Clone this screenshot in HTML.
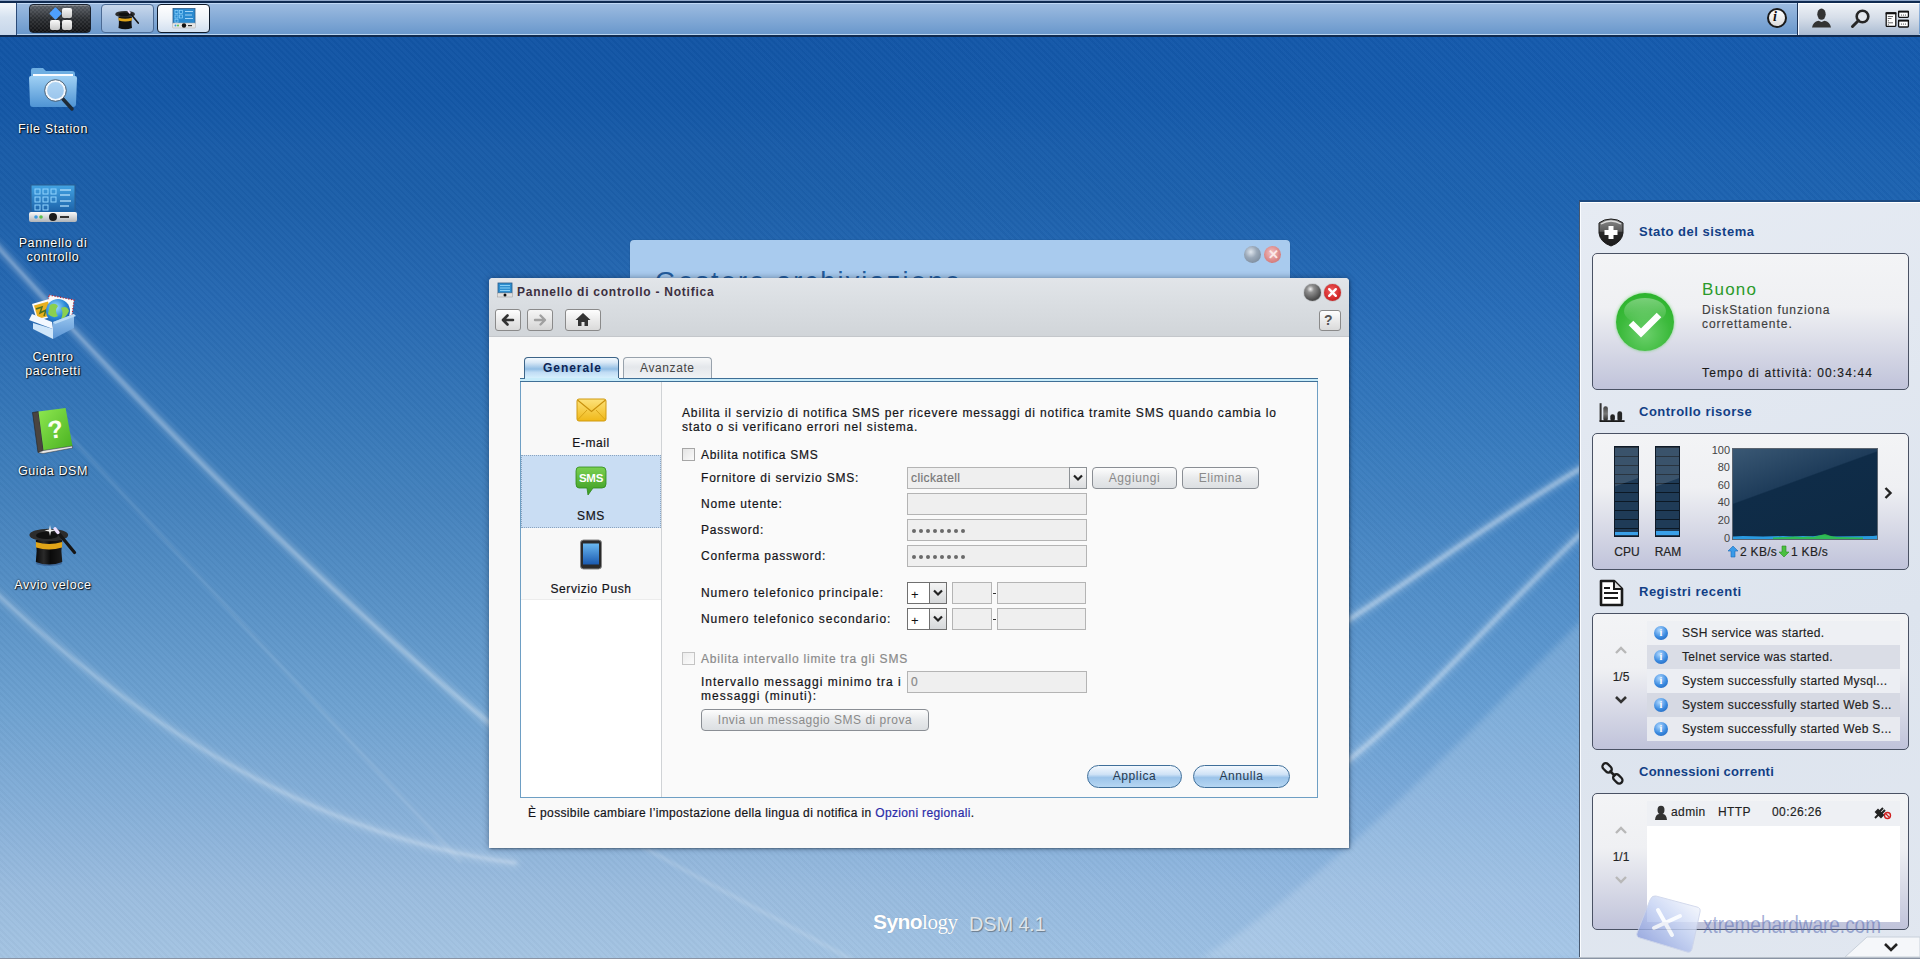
<!DOCTYPE html>
<html><head><meta charset="utf-8">
<style>
*{box-sizing:border-box}
html,body{margin:0;padding:0}
body{width:1920px;height:959px;overflow:hidden;position:relative;font-family:"Liberation Sans",sans-serif;font-size:12px;color:#000;
background:linear-gradient(to right,rgba(40,130,230,0) 700px,rgba(40,130,230,.12) 1580px),linear-gradient(to bottom,#0f3f7c 0,#0f3f7c 37px,#1255a5 37px,#1357a6 100px,#195ca8 150px,#1c5fa9 200px,#2769b2 305px,#3677b8 420px,#4482bd 505px,#6da1d0 705px,#86afd8 810px,#9abcde 890px,#a4c4e2 959px);}
.abs{position:absolute}
.t{position:absolute;white-space:nowrap;line-height:14px}
#stripes{position:absolute;left:0;top:37px;width:1920px;height:922px;background:repeating-linear-gradient(45deg,rgba(255,255,255,0.02) 0 2.5px,rgba(0,0,0,0.018) 2.5px 4.5px)}
#swoosh{position:absolute;left:0;top:0}
/* top bar */
#topbar{position:absolute;left:0;top:0;width:1920px;height:37px;background:#0f2a50}
#topbar .g{position:absolute;left:0;top:3px;width:1920px;height:32px;background:linear-gradient(to bottom,#c0d8f5 0,#c0d8f5 1px,#9cbbe0 1px,#6a98cc 31px,#b8d4f0 31px)}
#topbar .t0{position:absolute;left:0;top:0;width:1920px;height:1px;background:#8fa6c8}
.dl{position:absolute;width:106px;left:0;text-align:center;color:#fff;font-size:12.5px;line-height:14px;letter-spacing:.62px;text-shadow:0 0 2px #000,1px 1px 1px rgba(0,0,0,.8)}
/* dialog */
.lbl{position:absolute;white-space:nowrap;line-height:14px;font-size:12px;letter-spacing:.8px;color:#141418;-webkit-text-stroke:.2px currentColor}
.inp{position:absolute;height:22px;background:#efefef;border:1px solid #b4b4b4}
.btn{position:absolute;height:22px;border:1px solid #8a8e94;border-radius:4px;background:linear-gradient(to bottom,#fdfdfd,#e8eaec 50%,#dcdfe2);color:#8a8a8a;text-align:center;line-height:20px;font-size:12px;letter-spacing:.6px}
.tool{position:absolute;height:22px;border:1px solid #8a8a8a;border-radius:3px;background:linear-gradient(to bottom,#fefefe,#e9e9e9 55%,#dadada)}
.pill{position:absolute;height:23px;border:1px solid #3f6f9a;border-radius:12px;background:linear-gradient(to bottom,#f4f9fe 0,#cfe2f6 40%,#9cc4ea 55%,#b6d6f2 100%);text-align:center;line-height:21px;color:#263a50;font-size:12px;letter-spacing:.6px}
/* right panel */
.hd{position:absolute;left:1639px;font-weight:bold;font-size:13px;color:#123f86;line-height:15px;white-space:nowrap;letter-spacing:.5px}
.box{position:absolute;left:1592px;width:317px;height:137px;border:1px solid #4a5264;border-radius:5px;background:linear-gradient(to bottom,#f3f4f6 0,#eff0f3 40%,#c0c3da 100%)}
.rt{position:absolute;white-space:nowrap;line-height:14px;font-size:12px;color:#222;letter-spacing:.5px;-webkit-text-stroke:.15px currentColor}
</style></head><body>
<div id="stripes"></div>
<svg id="swoosh" width="1920" height="959">
  <defs>
    <filter id="bl" x="-10%" y="-10%" width="120%" height="120%"><feGaussianBlur stdDeviation="1.5"/></filter>
    <filter id="bl2" x="-10%" y="-10%" width="120%" height="120%"><feGaussianBlur stdDeviation="3"/></filter>
  </defs>
  <g filter="url(#bl2)" fill="none" stroke-linecap="round" opacity=".8">
    <path d="M-5 243.4 L15 265.9 L35 288.2 L55 310.2 L75 331.9 L95 353.4 L115 374.6 L135 395.5 L155 416.2 L175 436.6 L195 456.7 L215 476.6 L235 496.3 L255 515.6 L275 534.7 L295 553.6 L315 572.1 L335 590.4 L355 608.5 L375 626.3 L395 643.8 L415 661.0 L435 678.0 L455 694.8 L475 711.2 L495 727.4 L515 743.4" stroke="rgba(255,255,255,0.25)" stroke-width="9" stroke-linejoin="round"/>
    <path d="M-5 592.4 L15 610.3 L35 627.6 L55 644.3 L75 660.4 L95 675.9 L115 690.8 L135 705.1 L155 718.8 L175 731.9 L195 744.4 L215 756.3 L235 767.6 L255 778.3 L275 788.4 L295 797.9 L315 806.8 L335 815.1 L355 822.8 L375 830.0 L395 836.5 L415 842.4 L435 847.7 L455 852.4 L475 856.5 L495 860.0 L515 863.0" stroke="rgba(255,255,255,0.2)" stroke-width="9" stroke-linejoin="round"/>
    <path d="M1345 622 C 1420 575, 1500 515, 1585 466" stroke="rgba(255,255,255,0.25)" stroke-width="10"/>
    <path d="M1345 763 C 1420 705, 1500 610, 1585 530" stroke="rgba(255,255,255,0.22)" stroke-width="10"/>
  </g>
  <g filter="url(#bl)" fill="none" stroke-linecap="round">
    <path d="M-5 243.4 L15 265.9 L35 288.2 L55 310.2 L75 331.9 L95 353.4 L115 374.6 L135 395.5 L155 416.2 L175 436.6 L195 456.7 L215 476.6 L235 496.3 L255 515.6 L275 534.7 L295 553.6 L315 572.1 L335 590.4 L355 608.5 L375 626.3 L395 643.8 L415 661.0 L435 678.0 L455 694.8 L475 711.2 L495 727.4 L515 743.4" stroke="rgba(255,255,255,0.27)" stroke-width="3.5" stroke-linejoin="round"/>
    <path d="M-5 592.4 L15 610.3 L35 627.6 L55 644.3 L75 660.4 L95 675.9 L115 690.8 L135 705.1 L155 718.8 L175 731.9 L195 744.4 L215 756.3 L235 767.6 L255 778.3 L275 788.4 L295 797.9 L315 806.8 L335 815.1 L355 822.8 L375 830.0 L395 836.5 L415 842.4 L435 847.7 L455 852.4 L475 856.5 L495 860.0 L515 863.0" stroke="rgba(255,255,255,0.24)" stroke-width="3" stroke-linejoin="round"/>
    <path d="M60 425.6 L100 469.2 L140 512.7 L180 556.3 L220 599.8 L260 643.4 L300 686.9 L340 730.5 L380 774.1 L420 817.6 L460 861.2" stroke="rgba(255,255,255,0.12)" stroke-width="3" stroke-linejoin="round"/>
    <path d="M640 845 C 700 880, 780 920, 850 959" stroke="rgba(255,255,255,0.15)" stroke-width="4"/>
    <path d="M1345 622 C 1420 575, 1500 515, 1585 466" stroke="rgba(255,255,255,0.3)" stroke-width="5"/>
    <path d="M1345 763 C 1420 705, 1500 610, 1585 530" stroke="rgba(255,255,255,0.28)" stroke-width="5"/>
  </g>
  <path d="M1200 959 C 1340 870, 1450 750, 1590 612 L 1590 959 Z" fill="rgba(255,255,255,0.16)" filter="url(#bl2)"/>
</svg>

<!-- TOP BAR -->
<div id="topbar">
  <div class="t0"></div>
  <div class="g"></div>
  <div class="abs" style="left:0;top:3px;width:17px;height:32px;background:linear-gradient(to bottom,#f4f8fc,#d6e2f0 45%,#c6d6ea);border-right:1px solid #2a4a78"></div>
  <!-- start button -->
  <div class="abs" style="left:29px;top:4px;width:62px;height:29px;border-radius:4px;border:1px solid #1a2330;background:repeating-conic-gradient(rgba(255,255,255,.07) 0 25%,rgba(0,0,0,0) 0 50%) 0 0/4px 4px,linear-gradient(to bottom,#5a5f66,#2a2d31 50%,#121316);box-shadow:inset 0 1px 0 rgba(255,255,255,.25)">
    <div class="abs" style="left:21px;top:4px;width:9px;height:9px;background:#4ea0ff;transform:rotate(45deg);border-radius:1px"></div>
    <div class="abs" style="left:32px;top:3px;width:10px;height:10px;background:linear-gradient(#fafafa,#c8c8c8);border-radius:2px"></div>
    <div class="abs" style="left:20px;top:15px;width:10px;height:10px;background:linear-gradient(#fafafa,#c8c8c8);border-radius:2px"></div>
    <div class="abs" style="left:32px;top:15px;width:10px;height:10px;background:linear-gradient(#fafafa,#c8c8c8);border-radius:2px"></div>
  </div>
  <!-- hat button -->
  <div class="abs" style="left:101px;top:4px;width:53px;height:29px;border-radius:4px;border:1px solid #4a6a94;background:linear-gradient(to bottom,#c8d8ec,#a6c0e0 55%,#8eb0d8)">
    <svg class="abs" style="left:13px;top:3px" width="24" height="22" viewBox="9 8 47 43">
      <path d="M15.8 25 Q17.5 36 15.8 47 Q29 52 42.3 47 Q40.5 36 42.3 25 Z" fill="#111"/>
      <path d="M15.9 27 Q29 31 42.2 27 L42 32.5 Q29 36.5 16 32.5 Z" fill="#e0a418"/>
      <ellipse cx="28.8" cy="20" rx="19.4" ry="6.3" fill="#2c2c2c"/>
      <ellipse cx="27" cy="20.4" rx="11" ry="3.6" fill="#101010"/>
      <line x1="36" y1="15" x2="54.5" y2="37.5" stroke="#161616" stroke-width="3.2" stroke-linecap="round"/>
      <line x1="35" y1="13.8" x2="38" y2="17.5" stroke="#f0e0ff" stroke-width="3.4" stroke-linecap="round"/>
    </svg>
  </div>
  <!-- control panel button (active) -->
  <div class="abs" style="left:157px;top:4px;width:53px;height:29px;border-radius:4px;border:1px solid #0e1a2a;background:linear-gradient(to bottom,#ffffff,#eef3f9 50%,#d2e0f0)">
    <svg class="abs" style="left:14px;top:3px" width="24" height="21" viewBox="0 0 24 21">
      <rect x="1" y="0.5" width="22" height="15" fill="#2a8ad0" stroke="#2a5a88" stroke-width=".8"/>
      <g fill="none" stroke="#8fd4ff" stroke-width=".7"><rect x="3" y="2.5" width="3" height="3"/><rect x="7.5" y="2.5" width="3" height="3"/><rect x="3" y="7" width="3" height="3"/><rect x="7.5" y="7" width="3" height="3"/><rect x="3" y="11.2" width="3" height="3"/></g>
      <g stroke="#bfe6ff" stroke-width=".8"><line x1="13" y1="3.5" x2="21" y2="3.5"/><line x1="13" y1="7" x2="20" y2="7"/><line x1="13" y1="10.5" x2="21" y2="10.5"/></g>
      <rect x="0.5" y="15" width="23" height="5" rx="1" fill="#e6e6e6" stroke="#aaa" stroke-width=".5"/>
      <circle cx="3.5" cy="17.5" r="1" fill="#3a9ae0"/><circle cx="6" cy="17.5" r="1" fill="#5ac04a"/>
      <circle cx="12" cy="17.5" r="2.2" fill="#111"/>
      <rect x="16" y="17" width="4" height="1.2" fill="#333"/>
    </svg>
  </div>
  <!-- right -->
  <div class="abs" style="left:1767px;top:8px;width:20px;height:20px;border-radius:50%;border:2.5px solid #1a1a1a;background:linear-gradient(#ffffff,#dcdcdc)"></div>
  <div class="t" style="left:1773px;top:9px;font:italic bold 14px 'Liberation Serif',serif;color:#111">i</div>
  <div class="abs" style="left:1797px;top:3px;width:1px;height:32px;background:#1c3458"></div>
  <div class="abs" style="left:1798px;top:3px;width:121px;height:32px;background:linear-gradient(to bottom,#eef1f6,#d6dee9 45%,#aabbd2);border-top:1px solid #fff;border-left:1px solid #f4f8ff"></div>
  <svg class="abs" style="left:1810px;top:8px" width="24" height="21" viewBox="0 0 24 21">
    <ellipse cx="11.5" cy="6.2" rx="4.2" ry="5.6" fill="#333"/>
    <path d="M2 19.5 Q3 14 8.5 12.8 L11.5 14 L14.5 12.8 Q20 14 21 19.5 Z" fill="#333"/>
  </svg>
  <svg class="abs" style="left:1850px;top:9px" width="22" height="20" viewBox="0 0 22 20">
    <circle cx="12.5" cy="7.5" r="5.8" stroke="#262626" stroke-width="2.6" fill="#e4e8ee"/>
    <line x1="8.5" y1="11.5" x2="2.5" y2="17.5" stroke="#262626" stroke-width="3" stroke-linecap="round"/>
  </svg>
  <svg class="abs" style="left:1885px;top:10px" width="25" height="18" viewBox="0 0 25 18">
    <rect x="1.2" y="3" width="9.6" height="13.4" rx=".8" fill="#fff" stroke="#111" stroke-width="1.3"/>
    <rect x="0.6" y="2.3" width="10.8" height="2" fill="#111"/>
    <g stroke="#444" stroke-width=".8"><line x1="2.8" y1="6.5" x2="8" y2="6.5"/><line x1="2.8" y1="8.5" x2="6.5" y2="8.5"/><line x1="2.8" y1="10.8" x2="4" y2="10.8"/><line x1="2.8" y1="12.8" x2="8" y2="12.8"/><line x1="2.8" y1="14.8" x2="4" y2="14.8"/></g>
    <rect x="13.6" y="1.4" width="9.8" height="6" rx=".8" fill="#fff" stroke="#111" stroke-width="1.3"/>
    <rect x="13" y="0.8" width="11" height="1.8" fill="#111"/>
    <rect x="13.6" y="10.4" width="9.8" height="6.6" rx=".8" fill="#fff" stroke="#111" stroke-width="1.3"/>
    <rect x="13" y="9.8" width="11" height="1.8" fill="#111"/>
    <g fill="#333"><circle cx="16.5" cy="5" r=".6"/><circle cx="18.5" cy="5" r=".6"/><circle cx="20.5" cy="5" r=".6"/><circle cx="16.5" cy="14" r=".6"/><circle cx="18.5" cy="14" r=".6"/><circle cx="20.5" cy="14" r=".6"/></g>
  </svg>
</div>

<!--DESKTOP-->
<!-- File Station -->
<svg class="abs" style="left:28px;top:66px" width="50" height="46" viewBox="0 0 50 46">
  <defs>
    <linearGradient id="fold" x1="0" y1="0" x2="0" y2="1"><stop offset="0" stop-color="#9fd0f4"/><stop offset="1" stop-color="#4f94d4"/></linearGradient>
  </defs>
  <path d="M3 4 Q3 2 5 2 L15 2 L18 5 L44 5 Q47 5 47 8 L47 12 L3 12 Z" fill="#6eaee2"/>
  <rect x="5" y="8" width="40" height="8" fill="#fafcff"/>
  <path d="M1 12 Q1 10 3 10 L47 10 Q49 10 49 12 L48 38 Q48 41 45 41 L5 41 Q2 41 2 38 Z" fill="url(#fold)"/>
  <line x1="34" y1="32" x2="44" y2="43" stroke="#1e2a36" stroke-width="3.5" stroke-linecap="round"/>
  <circle cx="27.5" cy="24.5" r="9.5" fill="rgba(200,225,250,.55)" stroke="#f4f8fc" stroke-width="2.2"/>
  <circle cx="27.5" cy="24.5" r="10.8" fill="none" stroke="#4a5a6a" stroke-width=".9"/>
</svg>
<div class="dl" style="top:122px">File Station</div>
<!-- Pannello di controllo -->
<svg class="abs" style="left:28px;top:184px" width="50" height="40" viewBox="0 0 50 40">
  <defs><linearGradient id="scr" x1="0" y1="0" x2="0" y2="1"><stop offset="0" stop-color="#43a4e4"/><stop offset="1" stop-color="#1a5fa6"/></linearGradient>
  <linearGradient id="base" x1="0" y1="0" x2="0" y2="1"><stop offset="0" stop-color="#fafafa"/><stop offset="1" stop-color="#b0b4b8"/></linearGradient></defs>
  <rect x="3" y="1" width="44" height="28" fill="url(#scr)" stroke="#2b5f8f"/>
  <g fill="none" stroke="#8fd4ff" stroke-width="1">
    <rect x="7" y="5" width="5" height="5"/><rect x="15" y="5" width="5" height="5"/><rect x="23" y="5" width="5" height="5"/>
    <rect x="7" y="13" width="5" height="5"/><rect x="15" y="13" width="5" height="5"/><rect x="23" y="13" width="5" height="5"/>
    <rect x="7" y="21" width="5" height="5"/><rect x="15" y="21" width="5" height="5"/>
  </g>
  <g stroke="#bfe6ff" stroke-width="1.2"><line x1="32" y1="6" x2="43" y2="6"/><line x1="32" y1="11" x2="42" y2="11"/><line x1="32" y1="17" x2="43" y2="17"/><line x1="32" y1="22" x2="41" y2="22"/></g>
  <rect x="1" y="28" width="48" height="10" rx="2" fill="url(#base)"/>
  <circle cx="8" cy="33" r="1.8" fill="#3a9ae0"/><circle cx="13" cy="33" r="1.8" fill="#5ac04a"/>
  <circle cx="25" cy="33" r="4" fill="#1a1a1a"/>
  <rect x="32" y="32" width="9" height="2" fill="#333"/>
</svg>
<div class="dl" style="top:236px">Pannello di<br>controllo</div>
<!-- Centro pacchetti -->
<svg class="abs" style="left:20px;top:285px" width="70" height="65" viewBox="0 0 70 65">
  <defs>
    <radialGradient id="glb" cx=".4" cy=".35" r=".7"><stop offset="0" stop-color="#a8e0ff"/><stop offset=".6" stop-color="#2a8ad8"/><stop offset="1" stop-color="#1a5aa8"/></radialGradient>
    <linearGradient id="bxr" x1="0" y1="0" x2="0" y2="1"><stop offset="0" stop-color="#9cc8f0"/><stop offset="1" stop-color="#5a94d4"/></linearGradient>
  </defs>
  <polygon points="29,10 54,15 52,31 27,26" fill="#f8f8f8" stroke="#c02030" stroke-width="1.2" stroke-dasharray="1.2 1.6"/>
  <polygon points="12,19 29,14 34,31 17,36" fill="#fafafa"/>
  <polygon points="14,20.5 28,16.5 32,30 18,34" fill="#e8b020"/>
  <path d="M16 24 L22 22 L20 28 L26 25 L24 31" stroke="#507020" stroke-width="1.5" fill="none"/>
  <circle cx="38" cy="26" r="12" fill="url(#glb)"/>
  <path d="M30 20 Q35 17 38 21 Q34 26 38 31 Q33 34 28 29 Z M41 23 Q47 20 49 26 Q46 33 41 34 Q44 28 41 23 Z" fill="#8ad050"/>
  <polygon points="33,37 54,29 54,43 33,54" fill="url(#bxr)"/>
  <polygon points="13,38 33,44 33,54 13,44" fill="#cfe6fa"/>
  <polygon points="9,35 12,29 32,37 33,44" fill="#f2f8ff"/>
  <polygon points="33,37 54,29 56,31 35,39" fill="#b8daf6"/>
</svg>
<div class="dl" style="top:350px">Centro<br>pacchetti</div>
<!-- Guida DSM -->
<svg class="abs" style="left:30px;top:406px" width="46" height="50" viewBox="0 0 46 50">
  <defs><linearGradient id="gbk" x1="0" y1="0" x2="1" y2="1"><stop offset="0" stop-color="#8ee850"/><stop offset="1" stop-color="#48b020"/></linearGradient></defs>
  <polygon points="2.5,6.5 8.5,5.6 13.5,44.5 8,46.5" fill="#4a4440" stroke="#222" stroke-width=".6"/>
  <polygon points="8.5,5.6 35.6,2 42.5,40 13.5,44.5" fill="url(#gbk)"/>
  <polygon points="8,46.5 13.5,44.5 42.5,40 42.5,42 13,47.5" fill="#e8e8e8" stroke="#333" stroke-width=".5"/>
  <text x="25.5" y="32" font-family="Liberation Sans" font-weight="bold" font-size="25" fill="#fafff0" transform="rotate(-8 25 24)" text-anchor="middle">?</text>
</svg>
<div class="dl" style="top:464px">Guida DSM</div>
<!-- Avvio veloce -->
<svg class="abs" style="left:20px;top:515px" width="70" height="60" viewBox="0 0 70 60">
  <defs><linearGradient id="hatc" x1="0" y1="0" x2="1" y2="0"><stop offset="0" stop-color="#0a0a0a"/><stop offset=".3" stop-color="#2a2a2a"/><stop offset=".55" stop-color="#0a0a0a"/><stop offset="1" stop-color="#1c1c1c"/></linearGradient></defs>
  <ellipse cx="29" cy="48" rx="13" ry="3" fill="rgba(0,0,40,.25)"/>
  <path d="M15.8 25 Q17.5 36 15.8 47 Q29 52 42.3 47 Q40.5 36 42.3 25 Z" fill="url(#hatc)"/>
  <path d="M15.9 27 Q29 31 42.2 27 L42 32.5 Q29 36.5 16 32.5 Z" fill="#e0a418"/>
  <ellipse cx="28.8" cy="20" rx="19.4" ry="6.3" fill="#2c2c2c"/>
  <ellipse cx="27" cy="20.4" rx="11" ry="3.6" fill="#101010"/>
  <line x1="36" y1="15" x2="54.5" y2="37.5" stroke="#161616" stroke-width="3.2" stroke-linecap="round"/>
  <line x1="35" y1="13.8" x2="38" y2="17.5" stroke="#f0e0ff" stroke-width="3.4" stroke-linecap="round"/>
  <path d="M30 10 L31 14.5 L35.5 15.5 L31 16.5 L30 21 L29 16.5 L24.5 15.5 L29 14.5 Z" fill="#fff" opacity=".9"/>
</svg>
<div class="dl" style="top:578px">Avvio veloce</div>

<!--DIALOGS-->
<!-- BACK WINDOW -->
<div class="abs" style="left:630px;top:240px;width:660px;height:60px;background:#a9cbee;border-radius:4px 4px 0 0;overflow:hidden;box-shadow:0 0 1px rgba(0,0,0,.4)">
  <div class="t" style="left:25px;top:27px;font-size:27px;line-height:30px;color:#235c9c;letter-spacing:2.2px">Gestore archiviazione</div>
  <div class="abs" style="left:614px;top:6px;width:17px;height:17px;border-radius:50%;background:radial-gradient(circle at 40% 35%,#dfe6ee 0,#9aa8b8 40%,#6f7f90 100%)"></div>
  <div class="abs" style="left:634px;top:6px;width:17px;height:17px;border-radius:50%;background:radial-gradient(circle at 45% 40%,#f4c4c4 0,#dc8a8a 55%,#c46a6a 100%)"></div>
  <div class="t" style="left:638px;top:7px;font:bold 13px/15px 'Liberation Sans';color:#fbe8e8">&#x2715;</div>
</div>

<!-- DIALOG -->
<div id="dlg" class="abs" style="left:489px;top:278px;width:860px;height:570px;background:#f9f9f9;border-radius:4px 4px 0 0;box-shadow:0 0 6px rgba(10,30,60,.45),1px 1px 2px rgba(0,0,0,.3)">
  <div class="abs" style="left:0;top:0;width:860px;height:59px;border-radius:4px 4px 0 0;background:linear-gradient(to bottom,#e2e5e9 0,#dce0e4 30%,#d1d5d9 100%);border-bottom:1px solid #c4c7cb"></div>
  <!-- title icon -->
  <svg class="abs" style="left:8px;top:4px" width="16" height="16" viewBox="0 0 16 16">
    <rect x="1" y="1" width="14" height="10" fill="#2f8fd0" stroke="#2a5a88" stroke-width=".8"/>
    <g stroke="#9fe0ff" stroke-width=".8"><line x1="3" y1="3.5" x2="13" y2="3.5"/><line x1="3" y1="6" x2="13" y2="6"/><line x1="3" y1="8.5" x2="13" y2="8.5"/></g>
    <rect x="0.5" y="11" width="15" height="4" fill="#e0e0e0" stroke="#999" stroke-width=".5"/>
    <circle cx="8" cy="13" r="1.5" fill="#111"/>
  </svg>
  <div class="t" style="left:28px;top:7px;font-weight:bold;font-size:12px;letter-spacing:.75px;color:#3b2f3f">Pannello di controllo - Notifica</div>
  <!-- min / close -->
  <div class="abs" style="left:815px;top:6px;width:17px;height:17px;border-radius:50%;background:radial-gradient(circle at 38% 30%,#f0f0f0 0,#909090 22%,#4a4a4a 70%,#6a6a6a 100%);box-shadow:0 0 1px #222"></div>
  <div class="abs" style="left:835px;top:6px;width:17px;height:17px;border-radius:50%;background:radial-gradient(circle at 45% 40%,#f06060 0,#d42a2a 60%,#a81818 100%);box-shadow:0 0 1px #622"></div>
  <svg class="abs" style="left:835px;top:6px" width="17" height="17" viewBox="0 0 17 17"><path d="M5.2 5.2 L11.8 11.8 M11.8 5.2 L5.2 11.8" stroke="#fff" stroke-width="2.4" stroke-linecap="round"/></svg>
  <!-- toolbar -->
  <div class="tool" style="left:6px;top:31px;width:26px;height:22px"></div>
  <svg class="abs" style="left:10px;top:34px" width="18" height="16" viewBox="0 0 18 16"><path d="M14 8 L4.5 8 M8.5 3.5 L4 8 L8.5 12.5" stroke="#333" stroke-width="2.6" fill="none" stroke-linecap="round" stroke-linejoin="round"/></svg>
  <div class="tool" style="left:38px;top:31px;width:26px;height:22px;background:linear-gradient(to bottom,#f6f6f6,#e4e4e4 55%,#d4d4d4)"></div>
  <svg class="abs" style="left:42px;top:34px" width="18" height="16" viewBox="0 0 18 16"><path d="M4 8 L13.5 8 M9.5 3.5 L14 8 L9.5 12.5" stroke="#a0a0a0" stroke-width="2.4" fill="none" stroke-linecap="round" stroke-linejoin="round"/></svg>
  <div class="tool" style="left:76px;top:31px;width:36px;height:22px"></div>
  <svg class="abs" style="left:85px;top:33px" width="18" height="17" viewBox="0 0 18 17"><path d="M9 2 L1.5 9 L4 9 L4 15 L7.5 15 L7.5 11 L10.5 11 L10.5 15 L14 15 L14 9 L16.5 9 Z" fill="#333"/></svg>
  <div class="tool" style="left:830px;top:32px;width:22px;height:21px"></div>
  <div class="t" style="left:835px;top:35px;font-weight:bold;font-size:14px;color:#555">?</div>

  <!-- tabs -->
  <div class="abs" style="left:35px;top:79px;width:95px;height:24px;border:1px solid #3c6488;border-bottom:none;border-radius:4px 4px 0 0;background:linear-gradient(to bottom,#f4faff 0,#d8e8f6 20%,#92bee4 48%,#c0dcf4 62%,#d4eefc 85%,#c8ecfa 100%)"></div>
  <div class="t" style="left:54px;top:83px;font-weight:bold;font-size:12px;letter-spacing:.95px;color:#0c2454">Generale</div>
  <div class="abs" style="left:134px;top:79px;width:89px;height:21px;border:1px solid #98a2ac;border-bottom:none;border-radius:4px 4px 0 0;background:linear-gradient(to bottom,#f8f9fa,#e4e7eb 45%,#f0f2f4)"></div>
  <div class="t" style="left:151px;top:83px;font-size:12px;letter-spacing:.6px;color:#444">Avanzate</div>
  <!-- tab strip -->
  <div class="abs" style="left:31px;top:100px;width:798px;height:4px;background:#c8ecfa;border-top:1px solid #3f6f96;border-bottom:1px solid #3f6f96"></div>
  <div class="abs" style="left:36px;top:100px;width:94px;height:3px;background:#c8ecfa"></div>
  <!-- tab panel -->
  <div class="abs" style="left:31px;top:104px;width:798px;height:416px;border:1px solid #6e9fc4;border-top:none;background:#fafafa"></div>
  <!-- nav column -->
  <div class="abs" style="left:32px;top:104px;width:141px;height:415px;background:#fff;border-right:1px solid #d0d3d6"></div>
  <div class="abs" style="left:32px;top:104px;width:140px;height:73px;background:#f8f8f8"></div>
  <div class="abs" style="left:32px;top:177px;width:140px;height:73px;background:#c9ddf3;border:1px dotted #8aa4c0"></div>
  <div class="abs" style="left:32px;top:250px;width:140px;height:72px;background:#f8f8f8;border-bottom:1px solid #ececec"></div>
  <!-- email icon -->
  <svg class="abs" style="left:87px;top:120px" width="31" height="25" viewBox="0 0 31 25">
    <defs><linearGradient id="env" x1="0" y1="0" x2="0" y2="1"><stop offset="0" stop-color="#fde27a"/><stop offset="1" stop-color="#f0b818"/></linearGradient></defs>
    <rect x="1" y="1" width="29" height="22" rx="2" fill="url(#env)" stroke="#d09a10" stroke-width="1"/>
    <path d="M1.5 2 L15.5 13.5 L29.5 2" stroke="#c8900c" stroke-width="1.1" fill="none"/>
    <path d="M1.5 22 L11 12 M29.5 22 L20 12" stroke="#d8a418" stroke-width="1" fill="none"/>
  </svg>
  <div class="lbl" style="left:32px;width:140px;text-align:center;top:158px;letter-spacing:.6px">E-mail</div>
  <!-- sms icon -->
  <svg class="abs" style="left:86px;top:188px" width="32" height="32" viewBox="0 0 32 32">
    <defs><linearGradient id="smsg" x1="0" y1="0" x2="0" y2="1"><stop offset="0" stop-color="#7ad050"/><stop offset="1" stop-color="#3a9a22"/></linearGradient></defs>
    <path d="M4 1 L27 1 Q31 1 31 5 L31 18 Q31 22 27 22 L18 22 L13 29 L12 22 L4 22 Q1 22 1 18 L1 5 Q1 1 4 1 Z" fill="url(#smsg)" stroke="#2e8a1a" stroke-width=".8"/>
    <text x="16" y="16" font-family="Liberation Sans" font-weight="bold" font-size="11.5" fill="#fff" text-anchor="middle" letter-spacing="-.3">SMS</text>
  </svg>
  <div class="lbl" style="left:32px;width:140px;text-align:center;top:231px;letter-spacing:.6px">SMS</div>
  <!-- push icon -->
  <svg class="abs" style="left:90px;top:261px" width="24" height="32" viewBox="0 0 24 32">
    <defs><linearGradient id="phs" x1="0" y1="0" x2="0" y2="1"><stop offset="0" stop-color="#6ab8f0"/><stop offset="1" stop-color="#1a5ab0"/></linearGradient></defs>
    <rect x="1.5" y="1" width="21" height="29" rx="3" fill="#2a2a2a" stroke="#888" stroke-width="1"/>
    <rect x="4" y="4.5" width="16" height="21" fill="url(#phs)"/>
  </svg>
  <div class="lbl" style="left:32px;width:140px;text-align:center;top:304px;letter-spacing:.6px">Servizio Push</div>

  <!-- form -->
  <div class="lbl" style="left:193px;top:128px;line-height:14px;letter-spacing:.85px">Abilita il servizio di notifica SMS per ricevere messaggi di notifica tramite SMS quando cambia lo<br>stato o si verificano errori nel sistema.</div>
  <div class="abs" style="left:193px;top:170px;width:13px;height:13px;border:1px solid #a6a6a6;background:linear-gradient(135deg,#e4e4e4,#fafafa)"></div>
  <div class="lbl" style="left:212px;top:170px;letter-spacing:.7px">Abilita notifica SMS</div>
  <div class="lbl" style="left:212px;top:193px">Fornitore di servizio SMS:</div>
  <div class="lbl" style="left:212px;top:219px">Nome utente:</div>
  <div class="lbl" style="left:212px;top:245px">Password:</div>
  <div class="lbl" style="left:212px;top:271px">Conferma password:</div>
  <div class="lbl" style="left:212px;top:308px;letter-spacing:.95px">Numero telefonico principale:</div>
  <div class="lbl" style="left:212px;top:334px;letter-spacing:.95px">Numero telefonico secondario:</div>

  <div class="inp" style="left:418px;top:189px;width:180px"></div>
  <div class="lbl" style="left:422px;top:193px;color:#777;letter-spacing:.4px">clickatell</div>
  <div class="abs" style="left:580px;top:189px;width:18px;height:22px;border:1px solid #8e9296;background:linear-gradient(to bottom,#fafafa,#dcdee0)"></div>
  <svg class="abs" style="left:583px;top:195px" width="12" height="10" viewBox="0 0 12 10"><path d="M2 2.5 L6 6.5 L10 2.5" stroke="#222" stroke-width="2.2" fill="none"/></svg>
  <div class="btn" style="left:603px;top:189px;width:85px">Aggiungi</div>
  <div class="btn" style="left:693px;top:189px;width:77px">Elimina</div>
  <div class="inp" style="left:418px;top:215px;width:180px"></div>
  <div class="inp" style="left:418px;top:241px;width:180px"></div>
  <div class="inp" style="left:418px;top:267px;width:180px"></div>
  <svg class="abs" style="left:422px;top:250px" width="56" height="6"><g fill="#6a6a6a"><circle cx="3" cy="3" r="2"/><circle cx="10" cy="3" r="2"/><circle cx="17" cy="3" r="2"/><circle cx="24" cy="3" r="2"/><circle cx="31" cy="3" r="2"/><circle cx="38" cy="3" r="2"/><circle cx="45" cy="3" r="2"/><circle cx="52" cy="3" r="2"/></g></svg>
  <svg class="abs" style="left:422px;top:276px" width="56" height="6"><g fill="#6a6a6a"><circle cx="3" cy="3" r="2"/><circle cx="10" cy="3" r="2"/><circle cx="17" cy="3" r="2"/><circle cx="24" cy="3" r="2"/><circle cx="31" cy="3" r="2"/><circle cx="38" cy="3" r="2"/><circle cx="45" cy="3" r="2"/><circle cx="52" cy="3" r="2"/></g></svg>

  <!-- phone rows -->
  <div class="abs" style="left:418px;top:304px;width:40px;height:22px;border:1px solid #707070;background:#fff"></div>
  <div class="abs" style="left:440px;top:304px;width:18px;height:22px;border:1px solid #707070;background:linear-gradient(to bottom,#f4f4f4,#d6d8da)"></div>
  <div class="t" style="left:422px;top:310px;font-size:13px;color:#111">+</div>
  <svg class="abs" style="left:443px;top:310px" width="12" height="10" viewBox="0 0 12 10"><path d="M2 2.5 L6 6.5 L10 2.5" stroke="#222" stroke-width="2.2" fill="none"/></svg>
  <div class="inp" style="left:463px;top:304px;width:40px"></div>
  <div class="abs" style="left:504px;top:315px;width:3px;height:1px;background:#333"></div>
  <div class="inp" style="left:508px;top:304px;width:89px"></div>
  <div class="abs" style="left:418px;top:330px;width:40px;height:22px;border:1px solid #707070;background:#fff"></div>
  <div class="abs" style="left:440px;top:330px;width:18px;height:22px;border:1px solid #707070;background:linear-gradient(to bottom,#f4f4f4,#d6d8da)"></div>
  <div class="t" style="left:422px;top:336px;font-size:13px;color:#111">+</div>
  <svg class="abs" style="left:443px;top:336px" width="12" height="10" viewBox="0 0 12 10"><path d="M2 2.5 L6 6.5 L10 2.5" stroke="#222" stroke-width="2.2" fill="none"/></svg>
  <div class="inp" style="left:463px;top:330px;width:40px"></div>
  <div class="abs" style="left:504px;top:341px;width:3px;height:1px;background:#333"></div>
  <div class="inp" style="left:508px;top:330px;width:89px"></div>

  <!-- interval -->
  <div class="abs" style="left:193px;top:374px;width:13px;height:13px;border:1px solid #c4c4c4;background:linear-gradient(135deg,#ececec,#fcfcfc)"></div>
  <div class="lbl" style="left:212px;top:374px;color:#8a8a8a">Abilita intervallo limite tra gli SMS</div>
  <div class="lbl" style="left:212px;top:397px;letter-spacing:1px">Intervallo messaggi minimo tra i<br>messaggi (minuti):</div>
  <div class="inp" style="left:418px;top:393px;width:180px"></div>
  <div class="lbl" style="left:422px;top:397px;color:#888;letter-spacing:.4px">0</div>
  <div class="btn" style="left:212px;top:431px;width:228px;letter-spacing:.5px">Invia un messaggio SMS di prova</div>

  <div class="pill" style="left:598px;top:487px;width:95px">Applica</div>
  <div class="pill" style="left:704px;top:487px;width:97px">Annulla</div>

  <div class="lbl" style="left:39px;top:528px;letter-spacing:.36px">È possibile cambiare l’impostazione della lingua di notifica in <span style="color:#2b2ba8">Opzioni regionali</span>.</div>
</div>

<!--PANEL-->
<div class="abs" style="left:1579px;top:200px;width:341px;height:759px;background:linear-gradient(160deg,#e6ebf3 0,#dde4ee 60%,#e1e7f0 100%);border-left:1px solid #48586e;border-top:2px solid #1d4a80">
  <div class="abs" style="left:0;top:0;width:340px;height:1px;background:#fff"></div>
  <div class="abs" style="left:0;top:0;width:1px;height:757px;background:#fafcff"></div>
</div>
<div class="abs" style="left:0;top:958px;width:1920px;height:1px;background:#8a94a4"></div><div class="abs" style="left:1579px;top:957px;width:341px;height:1px;background:#b8c0ca"></div>
<!-- watermark collapse tab -->
<svg class="abs" style="left:1845px;top:936px" width="75" height="21" viewBox="0 0 75 21"><path d="M0 21 L22 1 L75 1 L75 21 Z" fill="#f5f7fa" stroke="#c8d0da" stroke-width="1"/><path d="M40 8 L46 14 L52 8" stroke="#222" stroke-width="2.6" fill="none"/></svg>

<!-- header 1 -->
<svg class="abs" style="left:1598px;top:218px" width="26" height="29" viewBox="0 0 26 29">
  <defs><linearGradient id="shl" x1="0" y1="0" x2="0" y2="1"><stop offset="0" stop-color="#8a8a8a"/><stop offset=".45" stop-color="#5a5a5a"/><stop offset=".5" stop-color="#2a2a2a"/><stop offset="1" stop-color="#1a1a1a"/></linearGradient></defs>
  <path d="M13 1 Q20 1 25 5 L25 15 Q24 24 13 28 Q2 24 1 15 L1 5 Q6 1 13 1 Z" fill="url(#shl)" stroke="#1a1a1a" stroke-width="1"/>
  <path d="M3 6 Q13 0 23 6" stroke="#ddd" stroke-width="1.3" fill="none"/>
  <path d="M10.5 8 L15.5 8 L15.5 12 L19.5 12 L19.5 17 L15.5 17 L15.5 21 L10.5 21 L10.5 17 L6.5 17 L6.5 12 L10.5 12 Z" fill="#fff"/>
</svg>
<div class="hd" style="top:224px">Stato del sistema</div>
<div class="box" style="top:253px"></div>
<div class="abs" style="left:1612px;top:288px;width:66px;height:66px;border-radius:50%;background:radial-gradient(circle,rgba(120,220,120,.45) 0,rgba(120,220,120,0) 70%)"></div>
<div class="abs" style="left:1616px;top:293px;width:58px;height:58px;border-radius:50%;background:radial-gradient(circle at 50% 70%,#6cd06c 0,#3cba3c 50%,#22b022 100%);box-shadow:0 0 3px rgba(60,200,60,.6)"></div>
<div class="abs" style="left:1624px;top:298px;width:42px;height:26px;border-radius:50%;background:linear-gradient(to bottom,rgba(255,255,255,.35),rgba(255,255,255,0))"></div>
<svg class="abs" style="left:1616px;top:293px" width="58" height="58" viewBox="0 0 58 58"><path d="M15 30 L25 40 L43 22" stroke="#fff" stroke-width="6.5" fill="none"/></svg>
<div class="t" style="left:1702px;top:280px;font-size:17px;line-height:19px;color:#2a9a2a;letter-spacing:1.2px">Buono</div>
<div class="rt" style="left:1702px;top:303px;color:#404040;letter-spacing:.95px">DiskStation funziona<br>correttamente.</div>
<div class="rt" style="left:1702px;top:366px;color:#1a1a1a;letter-spacing:1.15px">Tempo di attività: 00:34:44</div>

<!-- header 2 -->
<svg class="abs" style="left:1598px;top:402px" width="27" height="21" viewBox="0 0 27 21">
  <defs><linearGradient id="bar1" x1="0" y1="0" x2="0" y2="1"><stop offset="0" stop-color="#444"/><stop offset=".5" stop-color="#777"/><stop offset="1" stop-color="#222"/></linearGradient></defs>
  <rect x="1.6" y="1.2" width="2" height="18.4" fill="#333"/>
  <rect x="1.6" y="18.2" width="25" height="1.8" fill="#1a1a1a"/>
  <rect x="5.3" y="4.3" width="4.6" height="15" rx="2.2" fill="url(#bar1)"/>
  <rect x="12.3" y="12.2" width="4.6" height="7" rx="2.2" fill="#222"/>
  <rect x="19.4" y="9.2" width="4.7" height="10" rx="2.2" fill="#262626"/>
</svg>
<div class="hd" style="top:404px">Controllo risorse</div>
<div class="box" style="top:433px"></div>
<!-- cpu ram bars -->
<div class="abs" style="left:1614px;top:446px;width:25px;height:91px;background:repeating-linear-gradient(to bottom,#0c1824 0 1px,#1f3b57 1px 9px);border:1px solid #0e1a28"></div>
<div class="abs" style="left:1615px;top:447px;width:23px;height:89px;background:linear-gradient(160deg,rgba(255,255,255,.12) 0,rgba(255,255,255,.12) 40%,rgba(255,255,255,0) 41%)"></div>
<div class="abs" style="left:1615px;top:532px;width:23px;height:3px;background:#3aa0e8"></div>
<div class="abs" style="left:1655px;top:446px;width:25px;height:91px;background:repeating-linear-gradient(to bottom,#0c1824 0 1px,#1f3b57 1px 9px);border:1px solid #0e1a28"></div>
<div class="abs" style="left:1656px;top:447px;width:23px;height:89px;background:linear-gradient(160deg,rgba(255,255,255,.12) 0,rgba(255,255,255,.12) 40%,rgba(255,255,255,0) 41%)"></div>
<div class="abs" style="left:1656px;top:531px;width:23px;height:4px;background:#3aa0e8"></div>
<div class="rt" style="left:1614px;top:545px;width:26px;text-align:center;letter-spacing:0">CPU</div>
<div class="rt" style="left:1654px;top:545px;width:28px;text-align:center;letter-spacing:0">RAM</div>
<!-- graph -->
<div class="abs" style="left:1732px;top:448px;width:146px;height:92px;border:1px solid #5a6470;background:linear-gradient(160deg,#3a5874 0,#1e3c5a 38%,#0f2c48 39%,#0e2a44 100%)"></div>
<svg class="abs" style="left:1733px;top:525px" width="144" height="14" viewBox="0 0 144 14"><path d="M0 11.5 L10 11 L30 11.5 L50 11 L60 11.5 L70 11 L80 11.3 L90 10 L100 11.5 L120 11.2 L140 11 L144 10.5 L144 14 L0 14 Z" fill="#2a9ae0"/><path d="M40 12.5 L55 12 L62 11.5 L70 12 L75 11.5 L80 12 L86 10.5 L92 9 L98 11 L104 12 L130 12.5 L130 14 L40 14 Z" fill="#30c040" opacity=".85"/></svg>
<div class="t" style="left:1700px;top:444px;width:30px;text-align:right;font-size:11px;line-height:12px;color:#444">100</div>
<div class="t" style="left:1700px;top:461px;width:30px;text-align:right;font-size:11px;line-height:12px;color:#444">80</div>
<div class="t" style="left:1700px;top:479px;width:30px;text-align:right;font-size:11px;line-height:12px;color:#444">60</div>
<div class="t" style="left:1700px;top:496px;width:30px;text-align:right;font-size:11px;line-height:12px;color:#444">40</div>
<div class="t" style="left:1700px;top:514px;width:30px;text-align:right;font-size:11px;line-height:12px;color:#444">20</div>
<div class="t" style="left:1700px;top:532px;width:30px;text-align:right;font-size:11px;line-height:12px;color:#444">0</div>
<svg class="abs" style="left:1883px;top:486px" width="10" height="14" viewBox="0 0 10 14"><path d="M2.5 2 L7.5 7 L2.5 12" stroke="#222" stroke-width="2.4" fill="none"/></svg>
<svg class="abs" style="left:1727px;top:545px" width="12" height="13" viewBox="0 0 12 13"><path d="M6 1 L11 6 L8 6 L8 12 L4 12 L4 6 L1 6 Z" fill="#3a9ae8" stroke="#1a6ab8" stroke-width=".6"/></svg>
<div class="rt" style="left:1740px;top:545px;color:#222;letter-spacing:.3px">2 KB/s</div>
<svg class="abs" style="left:1778px;top:545px" width="12" height="13" viewBox="0 0 12 13"><path d="M4 1 L8 1 L8 7 L11 7 L6 12 L1 7 L4 7 Z" fill="#4ac040" stroke="#2a8a20" stroke-width=".6"/></svg>
<div class="rt" style="left:1791px;top:545px;color:#222;letter-spacing:.3px">1 KB/s</div>

<!-- header 3 -->
<svg class="abs" style="left:1599px;top:579px" width="25" height="28" viewBox="0 0 25 28">
  <path d="M2 2 L15 2 L23 10 L23 26 L2 26 Z" fill="#fff" stroke="#1a1a1a" stroke-width="2.6" stroke-linejoin="round"/>
  <path d="M15 2 L15 10 L23 10" fill="#ddd" stroke="#1a1a1a" stroke-width="2"/>
  <g stroke="#1a1a1a" stroke-width="2"><line x1="5" y1="9" x2="11" y2="9"/><line x1="5" y1="14" x2="19" y2="14"/><line x1="5" y1="19" x2="19" y2="19"/></g>
</svg>
<div class="hd" style="top:584px">Registri recenti</div>
<div class="box" style="top:613px"></div>
<div class="abs" style="left:1647px;top:621px;width:253px;height:24px;background:#eef0f4"></div>
<div class="abs" style="left:1647px;top:645px;width:253px;height:24px;background:#dadde6"></div>
<div class="abs" style="left:1647px;top:669px;width:253px;height:24px;background:#eceef3"></div>
<div class="abs" style="left:1647px;top:693px;width:253px;height:24px;background:#d6d9e3"></div>
<div class="abs" style="left:1647px;top:717px;width:253px;height:24px;background:#e8eaf0"></div>
<svg class="abs" style="left:1613px;top:645px" width="16" height="10" viewBox="0 0 16 10"><path d="M3 8 L8 3 L13 8" stroke="#b8b8b8" stroke-width="2.4" fill="none"/></svg>
<div class="rt" style="left:1606px;top:670px;width:30px;text-align:center;letter-spacing:0">1/5</div>
<svg class="abs" style="left:1613px;top:695px" width="16" height="10" viewBox="0 0 16 10"><path d="M3 2 L8 7 L13 2" stroke="#333" stroke-width="2.6" fill="none"/></svg>
<div class="abs" style="left:1654px;top:626px;width:14px;height:14px;border-radius:50%;background:radial-gradient(circle at 40% 30%,#b0d8ff 0,#3a8ae0 55%,#1a5ab0 100%)"></div><div class="t" style="left:1654px;top:626px;width:14px;text-align:center;font:bold 10px/14px 'Liberation Serif';color:#fff">i</div><div class="rt" style="left:1682px;top:626px;letter-spacing:.35px">SSH service was started.</div>
<div class="abs" style="left:1654px;top:650px;width:14px;height:14px;border-radius:50%;background:radial-gradient(circle at 40% 30%,#b0d8ff 0,#3a8ae0 55%,#1a5ab0 100%)"></div><div class="t" style="left:1654px;top:650px;width:14px;text-align:center;font:bold 10px/14px 'Liberation Serif';color:#fff">i</div><div class="rt" style="left:1682px;top:650px;letter-spacing:.35px">Telnet service was started.</div>
<div class="abs" style="left:1654px;top:674px;width:14px;height:14px;border-radius:50%;background:radial-gradient(circle at 40% 30%,#b0d8ff 0,#3a8ae0 55%,#1a5ab0 100%)"></div><div class="t" style="left:1654px;top:674px;width:14px;text-align:center;font:bold 10px/14px 'Liberation Serif';color:#fff">i</div><div class="rt" style="left:1682px;top:674px;letter-spacing:.35px">System successfully started Mysql...</div>
<div class="abs" style="left:1654px;top:698px;width:14px;height:14px;border-radius:50%;background:radial-gradient(circle at 40% 30%,#b0d8ff 0,#3a8ae0 55%,#1a5ab0 100%)"></div><div class="t" style="left:1654px;top:698px;width:14px;text-align:center;font:bold 10px/14px 'Liberation Serif';color:#fff">i</div><div class="rt" style="left:1682px;top:698px;letter-spacing:.35px">System successfully started Web S...</div>
<div class="abs" style="left:1654px;top:722px;width:14px;height:14px;border-radius:50%;background:radial-gradient(circle at 40% 30%,#b0d8ff 0,#3a8ae0 55%,#1a5ab0 100%)"></div><div class="t" style="left:1654px;top:722px;width:14px;text-align:center;font:bold 10px/14px 'Liberation Serif';color:#fff">i</div><div class="rt" style="left:1682px;top:722px;letter-spacing:.35px">System successfully started Web S...</div>


<!-- header 4 -->
<svg class="abs" style="left:1600px;top:761px" width="26" height="26" viewBox="0 0 26 26">
  <g fill="none" stroke="#1e1e1e" stroke-width="2.3"><rect x="3.85" y="1.65" width="6.5" height="10.5" rx="3.2" transform="rotate(-45 7.1 6.9)"/><rect x="14.55" y="12.65" width="6.5" height="10.5" rx="3.2" transform="rotate(-45 17.8 17.9)"/></g>
  <line x1="9.5" y1="9.5" x2="15.3" y2="15.3" stroke="#1e1e1e" stroke-width="2.6"/>
</svg>
<div class="hd" style="top:764px;letter-spacing:.25px">Connessioni correnti</div>
<div class="box" style="top:793px"></div>
<div class="abs" style="left:1647px;top:801px;width:253px;height:25px;background:#eef0f4"></div>
<div class="abs" style="left:1647px;top:826px;width:253px;height:96px;background:#fff"></div>
<svg class="abs" style="left:1613px;top:825px" width="16" height="10" viewBox="0 0 16 10"><path d="M3 8 L8 3 L13 8" stroke="#b8b8b8" stroke-width="2.4" fill="none"/></svg>
<div class="rt" style="left:1606px;top:850px;width:30px;text-align:center;letter-spacing:0">1/1</div>
<svg class="abs" style="left:1613px;top:875px" width="16" height="10" viewBox="0 0 16 10"><path d="M3 2 L8 7 L13 2" stroke="#b8b8b8" stroke-width="2.4" fill="none"/></svg>
<svg class="abs" style="left:1654px;top:805px" width="14" height="16" viewBox="0 0 14 16"><ellipse cx="7" cy="5" rx="3.5" ry="4.2" fill="#333"/><path d="M1 15 Q1.5 9.5 5 9 L9 9 Q12.5 9.5 13 15 Z" fill="#333"/></svg>
<div class="rt" style="left:1671px;top:805px;letter-spacing:.4px">admin</div>
<div class="rt" style="left:1718px;top:805px;letter-spacing:.4px">HTTP</div>
<div class="rt" style="left:1772px;top:805px;letter-spacing:.4px">00:26:26</div>
<svg class="abs" style="left:1874px;top:806px" width="18" height="14" viewBox="0 0 18 14"><path d="M1 12 L5 8 M4 4 L9 9 L7 11 L2 6 Z M6 5 L9 2 M8 7 L11 4" stroke="#222" stroke-width="2" fill="#222"/><circle cx="13.5" cy="9.5" r="3" fill="none" stroke="#d02020" stroke-width="1.4"/><line x1="11.5" y1="7.5" x2="15.5" y2="11.5" stroke="#d02020" stroke-width="1.3"/></svg>

<!-- watermark -->
<svg class="abs" style="left:1630px;top:890px" width="270" height="68" viewBox="0 0 270 68">
  <defs><linearGradient id="wm" x1="1" y1="0" x2="0" y2="1"><stop offset="0" stop-color="#ffffff"/><stop offset=".45" stop-color="#c4d2f4"/><stop offset="1" stop-color="#7a8ed6"/></linearGradient></defs>
  <g opacity=".8">
  <path d="M26 6 L67 17 Q71 18 70 22 L62 59 Q61 63 57 62 L10 48 Q6 47 7 43 L20 10 Q22 5 26 6 Z" fill="url(#wm)" stroke="#c8d0e8" stroke-width="1"/>
  <path d="M28 20 L42 45 M24 38 L50 26" stroke="#fafcff" stroke-width="4" stroke-linecap="round"/>
  </g>
  <text x="73" y="43.5" font-family="Liberation Sans" font-size="24" fill="rgba(80,100,175,.5)" transform="scale(0.79 1)" transform-origin="73 43.5">xtremehardware.com</text>
</svg>

<!-- Synology logo -->
<div class="t" style="left:873px;top:910px;font-size:21px;line-height:24px;color:#fff;font-weight:bold;letter-spacing:-.6px;text-shadow:0 0 1px rgba(0,0,0,.2)">Syno<span style="font-weight:normal;font-family:'Liberation Serif',serif;letter-spacing:-.4px">logy</span></div>
<div class="t" style="left:969px;top:912px;font-size:20px;line-height:24px;color:#dde4ea;letter-spacing:-.2px;text-shadow:1px 1px 1px #6a7a8a">DSM 4.1</div>

</body></html>
